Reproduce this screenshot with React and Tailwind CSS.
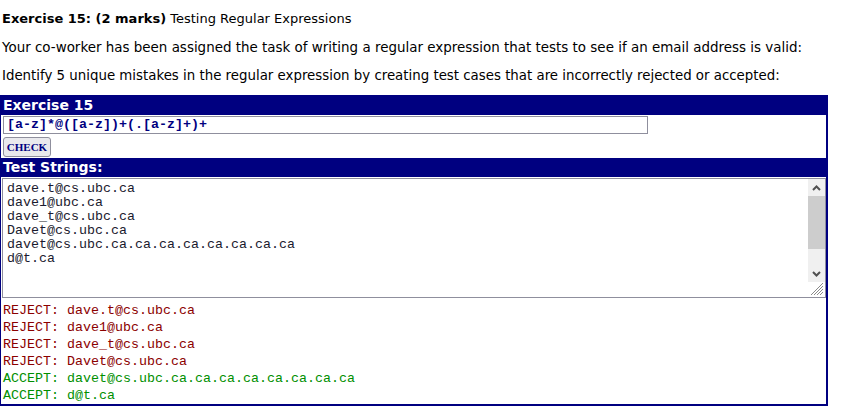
import React from "react";

const verdana = { fontFamily: '"DejaVu Sans", Verdana, sans-serif' };

export default function App() {
  const tests = [
    "dave.t@cs.ubc.ca",
    "dave1@ubc.ca",
    "dave_t@cs.ubc.ca",
    "Davet@cs.ubc.ca",
    "davet@cs.ubc.ca.ca.ca.ca.ca.ca.ca.ca",
    "d@t.ca",
  ];
  const results = [
    ["REJECT", "dave.t@cs.ubc.ca"],
    ["REJECT", "dave1@ubc.ca"],
    ["REJECT", "dave_t@cs.ubc.ca"],
    ["REJECT", "Davet@cs.ubc.ca"],
    ["ACCEPT", "davet@cs.ubc.ca.ca.ca.ca.ca.ca.ca.ca"],
    ["ACCEPT", "d@t.ca"],
  ];
  return (
    <div className="w-[846px] h-[415px] bg-white overflow-hidden text-black">
      <div className="text-[13px] leading-[16px] pl-[2px]" style={verdana}>
        <div className="pt-[11px]">
          <span className="font-bold">Exercise 15: (2 marks)</span> Testing Regular Expressions
        </div>
        <div className="mt-[13px] text-[13.45px]">
          Your co-worker has been assigned the task of writing a regular expression that tests to see if an email address is valid:
        </div>
        <div className="mt-[12px] text-[13.35px]">
          Identify 5 unique mistakes in the regular expression by creating test cases that are incorrectly rejected or accepted:
        </div>
      </div>
      <div className="mt-[11px] w-[828px] border-l-[1px] border-r-[2px] border-b-[2px] border-[#000080] flex flex-col">
        <div className="bg-[#000080] text-white font-bold text-[14px] h-[20px] leading-[20px] pl-[2px]" style={verdana}>
          Exercise 15
        </div>
        <div className="pl-[2px] pt-[1px] pb-[1px]">
          <div className="w-[645px] h-[18px] border border-[#8f8f9d] flex items-center pl-[3px] text-[13.33px] font-bold text-[#000080] font-['Liberation_Mono',monospace]">
            [a-z]*@([a-z])+(.[a-z]+)+
          </div>
          <div className="mt-[3px] ml-0 w-[48px] h-[20px] rounded-[3px] border border-[#8f8f9d] bg-[#e9e9ed] flex items-center justify-center text-[11px] font-bold text-[#000080] font-['Liberation_Serif',serif]">
            CHECK
          </div>
        </div>
        <div className="bg-[#000080] text-white font-bold text-[14px] h-[19px] leading-[19px] pl-[2px]" style={verdana}>
          Test Strings:
        </div>
        <div className="ml-[1px] mt-[1px] w-[824px] h-[120px] border border-[#8f8f9d] flex relative">
          <div className="flex-1 pl-[4px] pt-[3px] text-[13.33px] leading-[14px] text-[#1a1a2e] font-['Liberation_Mono',monospace] whitespace-pre">
            {tests.map((t) => (
              <div key={t}>{t}</div>
            ))}
          </div>
          <div className="w-[17px] h-[103px] flex flex-col bg-[#f0f0f0]">
            <div className="h-[17px] flex items-center justify-center">
              <svg width="9" height="6" viewBox="0 0 9 6">
                <path d="M1 5 L4.5 1.5 L8 5" stroke="#505050" strokeWidth="2" fill="none" />
              </svg>
            </div>
            <div className="h-[53px] bg-[#cdcdcd]" />
            <div className="flex-1" />
            <div className="h-[17px] flex items-center justify-center">
              <svg width="9" height="6" viewBox="0 0 9 6">
                <path d="M1 1 L4.5 4.5 L8 1" stroke="#505050" strokeWidth="2" fill="none" />
              </svg>
            </div>
          </div>
          <svg className="absolute right-[1px] bottom-[1px]" width="13" height="13" viewBox="0 0 13 13">
            <path d="M12 3 L3 12 M12 6 L6 12 M12 9 L9 12 M12 0 L0 12" stroke="#8a8a8a" strokeWidth="1" />
          </svg>
        </div>
        <div className="pl-[2px] pt-[4px] text-[13.33px] leading-[17px] font-['Liberation_Mono',monospace] whitespace-pre">
          {results.map(([k, v], i) => (
            <div key={i} className={k === "REJECT" ? "text-[#8b0000]" : "text-[#008f00]"}>
              {k}: {v}
            </div>
          ))}
        </div>
      </div>
    </div>
  );
}
